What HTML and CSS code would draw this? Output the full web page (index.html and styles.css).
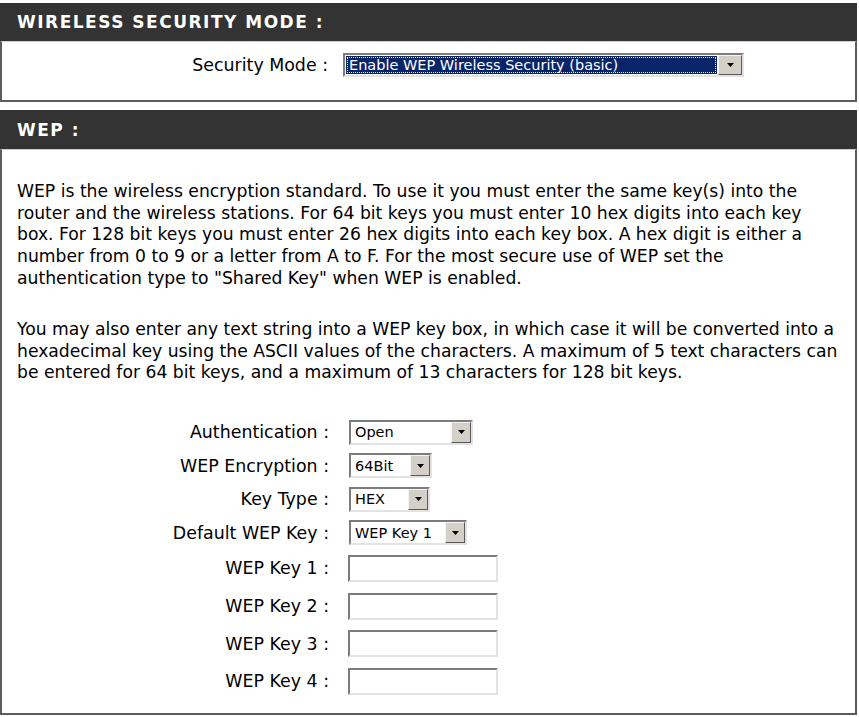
FILE: index.html
```html
<!DOCTYPE html>
<html>
<head>
<meta charset="utf-8">
<title>Wireless Security</title>
<link rel="stylesheet" href="styles.css">
</head>
<body>
<div class="page">
  <div class="hdr">WIRELESS SECURITY MODE :</div>
  <div class="box box-mode">
    <div class="mode-row">
      <span class="lbl lbl-mode">Security Mode :</span>
      <span class="sel sel-mode">
        <span class="val focus">Enable WEP Wireless Security (basic)</span>
        <span class="btn"><svg width="7" height="4" viewBox="0 0 7 4"><polygon points="0,0 7,0 3.5,4" fill="#000"/></svg></span>
      </span>
    </div>
  </div>

  <div class="hdr hdr2">WEP :</div>
  <div class="box box-wep">
    <p class="txt">WEP is the wireless encryption standard. To use it you must enter the same key(s) into the<br>router and the wireless stations. For 64 bit keys you must enter 10 hex digits into each key<br>box. For 128 bit keys you must enter 26 hex digits into each key box. A hex digit is either a<br>number from 0 to 9 or a letter from A to F. For the most secure use of WEP set the<br>authentication type to "Shared Key" when WEP is enabled.</p>
    <p class="txt txt2">You may also enter any text string into a WEP key box, in which case it will be converted into a<br>hexadecimal key using the ASCII values of the characters. A maximum of 5 text characters can<br>be entered for 64 bit keys, and a maximum of 13 characters for 128 bit keys.</p>

    <div class="form">
      <span class="lbl">Authentication :</span>
      <span class="ctl"><span class="sel w-auth"><span class="val">Open</span><span class="btn"><svg width="7" height="4" viewBox="0 0 7 4"><polygon points="0,0 7,0 3.5,4" fill="#000"/></svg></span></span></span>

      <span class="lbl">WEP Encryption :</span>
      <span class="ctl"><span class="sel w-enc"><span class="val">64Bit</span><span class="btn"><svg width="7" height="4" viewBox="0 0 7 4"><polygon points="0,0 7,0 3.5,4" fill="#000"/></svg></span></span></span>

      <span class="lbl">Key Type :</span>
      <span class="ctl"><span class="sel w-type"><span class="val">HEX</span><span class="btn"><svg width="7" height="4" viewBox="0 0 7 4"><polygon points="0,0 7,0 3.5,4" fill="#000"/></svg></span></span></span>

      <span class="lbl">Default WEP Key :</span>
      <span class="ctl"><span class="sel w-def"><span class="val">WEP Key 1</span><span class="btn"><svg width="7" height="4" viewBox="0 0 7 4"><polygon points="0,0 7,0 3.5,4" fill="#000"/></svg></span></span></span>

      <span class="lbl key">WEP Key 1 :</span>
      <span class="ctl key"><input class="inp" type="text"></span>

      <span class="lbl key">WEP Key 2 :</span>
      <span class="ctl key"><input class="inp" type="text"></span>

      <span class="lbl key">WEP Key 3 :</span>
      <span class="ctl key"><input class="inp" type="text"></span>

      <span class="lbl key">WEP Key 4 :</span>
      <span class="ctl key"><input class="inp" type="text"></span>
    </div>
  </div>
</div>
</body>
</html>
```

FILE: styles.css
```css
body {
  margin: 0;
  background: #fff;
  color: #000;
  font-family: "DejaVu Sans", Verdana, sans-serif;
}

.page {
  width: 857px;
  padding-top: 3px;
}

.hdr {
  height: 38px;
  background: #333333;
  color: #fff;
  font-family: "DejaVu Sans", Verdana, sans-serif;
  font-weight: bold;
  font-size: 17px;
  letter-spacing: 1.5px;
  padding-left: 17px;
  display: flex;
  align-items: center;
}

.hdr2 {
  margin-top: 8px;
  height: 39px;
}

.box {
  border: 2px solid #5c5c5c;
  border-top: 1px solid #cfcfcf;
}

.box-mode {
  height: 58px;
  box-sizing: content-box;
}

.mode-row {
  display: flex;
  align-items: center;
  padding-top: 11px;
}

.lbl {
  font-size: 17.4px;
  text-align: right;
  white-space: nowrap;
}

.lbl-mode {
  width: 326px;
  margin-right: 15px;
}

.box-wep {
  padding: 31px 2px 13px 15px;
}

.txt {
  margin: 0;
  font-size: 17.2px;
  line-height: 21.7px;
  white-space: nowrap;
}

.txt2 {
  margin-top: 29.5px;
}

.form {
  margin-top: 31.5px;
  display: grid;
  grid-template-columns: 312px auto;
  column-gap: 20px;
  grid-template-rows: repeat(4, 33.5px) repeat(4, 37.6px);
  align-items: center;
  justify-items: start;
}

.form .lbl {
  justify-self: end;
}

.ctl {
  display: flex;
  align-items: center;
}

/* select imitation */
.sel {
  display: inline-flex;
  align-items: stretch;
  box-sizing: border-box;
  height: 25px;
  border: 2px solid;
  border-color: #7c7c7c #e2e2e2 #e2e2e2 #7c7c7c;
  background: #fff;
}

.sel .val {
  flex: 1;
  display: flex;
  align-items: center;
  padding-left: 4px;
  font-size: 14.5px;
  white-space: nowrap;
  overflow: hidden;
}

.sel .btn {
  width: 20px;
  box-sizing: border-box;
  background: #d4d0c8;
  border: 1px solid;
  border-color: #f4f4f4 #5a5a5a #5a5a5a #f4f4f4;
  display: flex;
  align-items: center;
  justify-content: center;
}

.sel-mode {
  width: 401px;
  height: 24px;
}

.sel-mode .btn {
  width: 24px;
}

.val.focus {
  background: #0a246a;
  color: #fff;
  outline: 1px dotted #f3efb0;
  outline-offset: -2px;
  margin: 1px;
  padding-left: 3px;
}

.w-auth { width: 124px; }
.w-enc { width: 83px; }
.w-type { width: 81px; }
.w-def { width: 118px; }

.inp {
  width: 150px;
  height: 27px;
  box-sizing: border-box;
  margin: 0 0 0 -1px;
  padding: 0 3px;
  border: 2px solid;
  border-color: #7c7c7c #e2e2e2 #e2e2e2 #7c7c7c;
  background: #fff;
  font-family: "DejaVu Sans", Verdana, sans-serif;
  font-size: 14px;
}
```
